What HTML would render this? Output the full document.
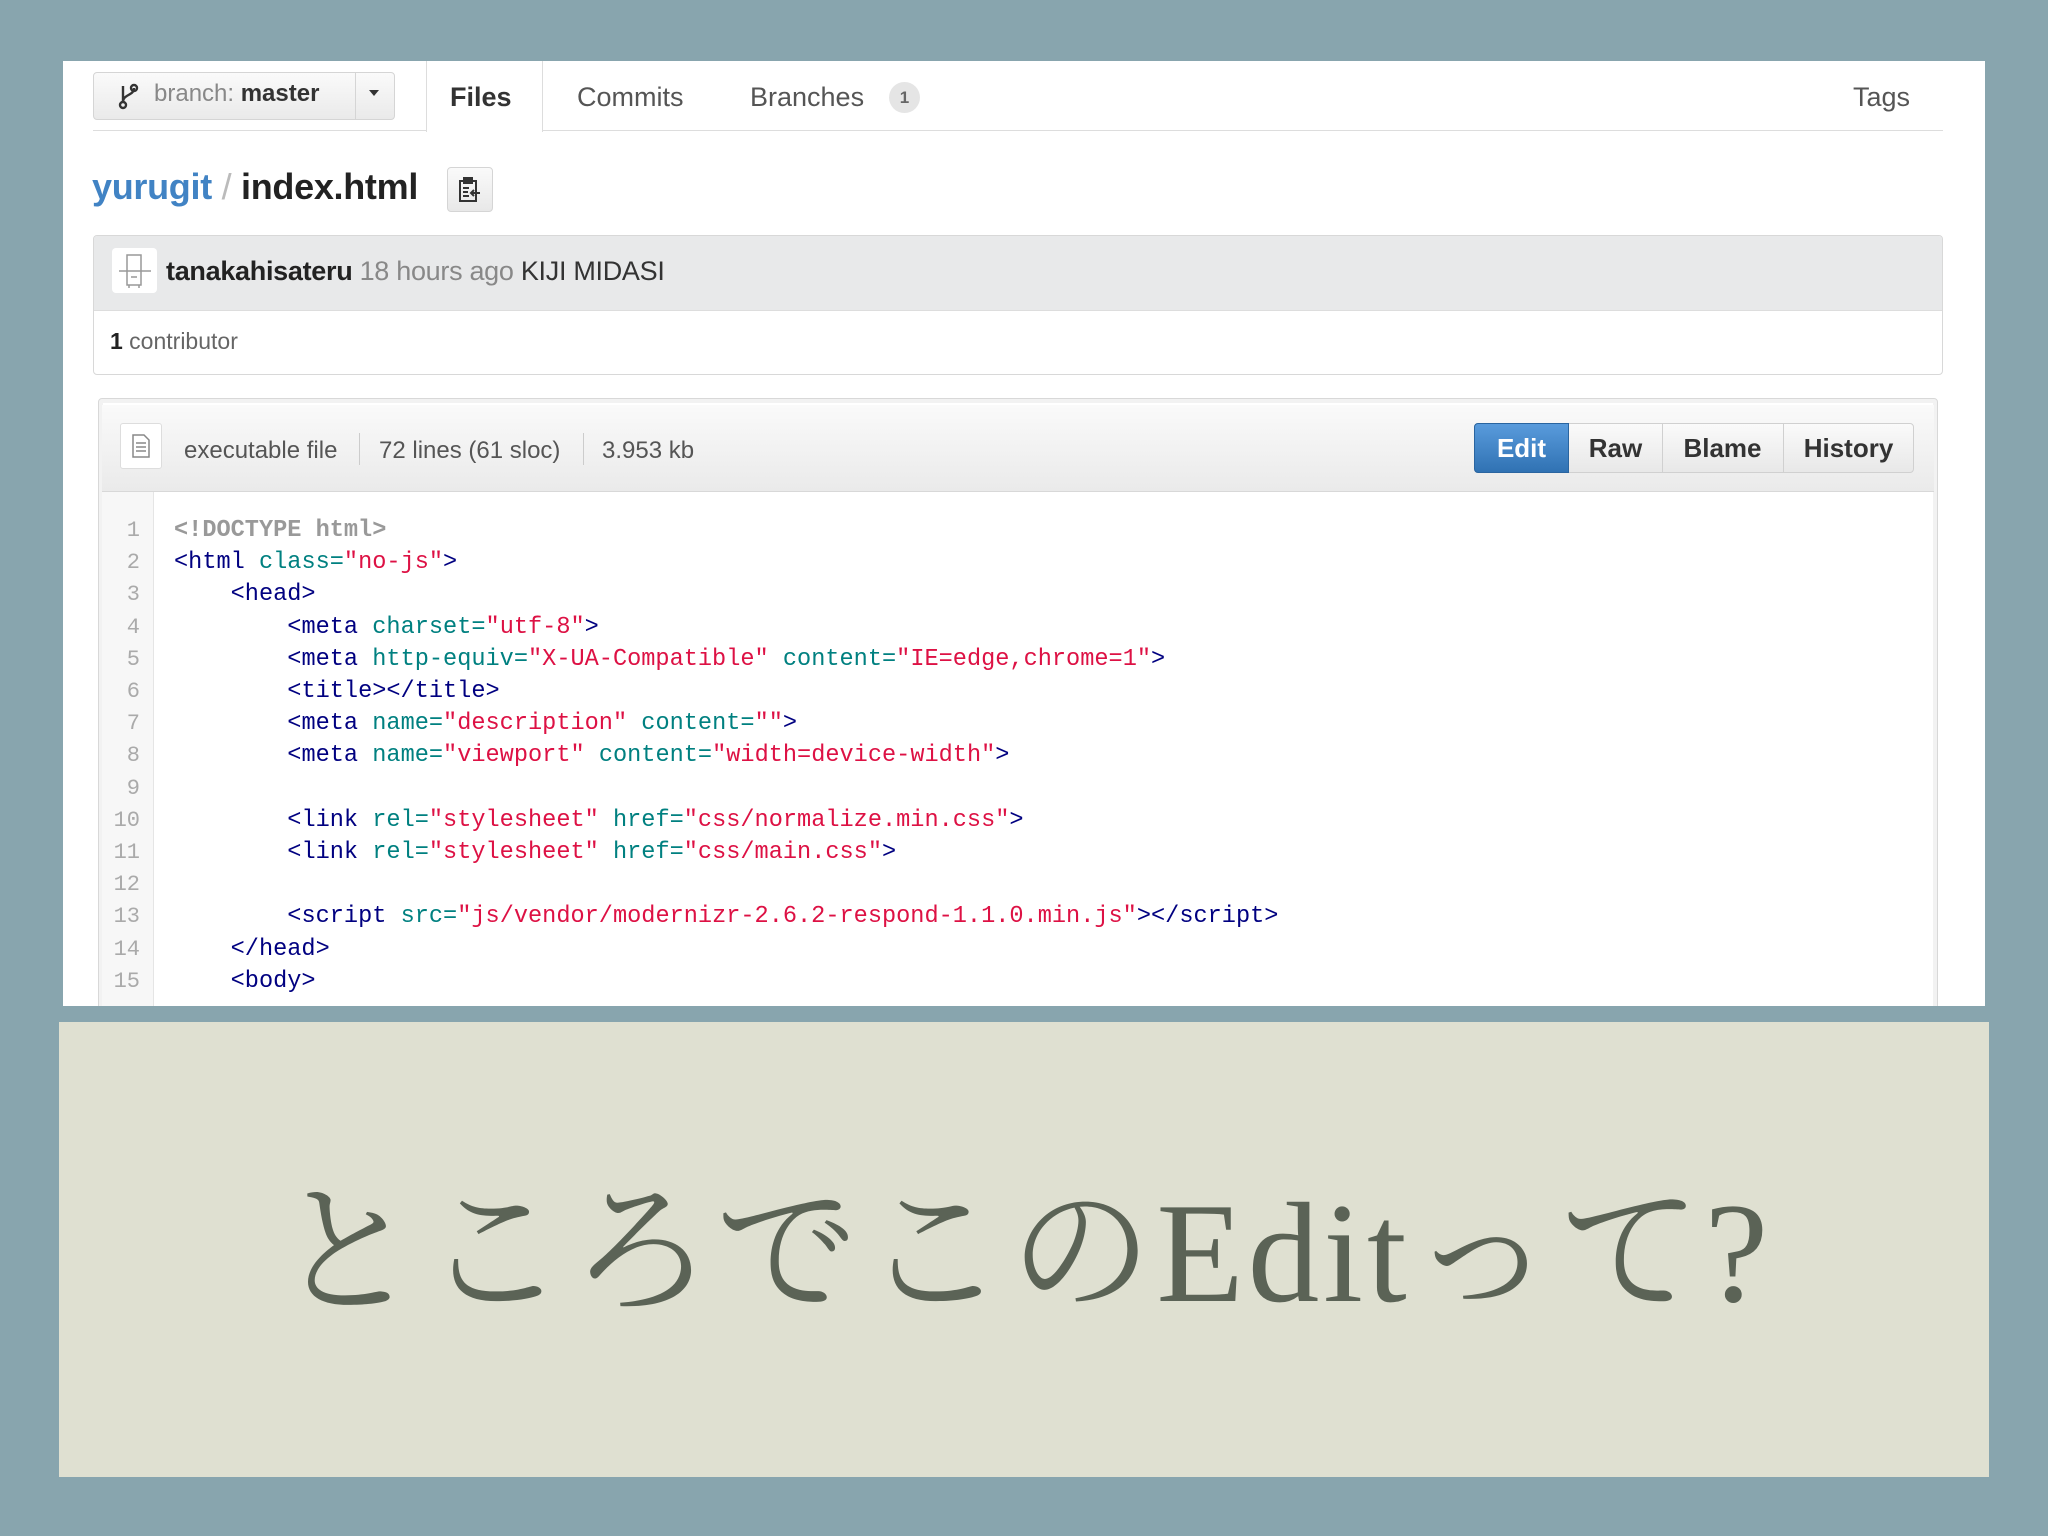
<!DOCTYPE html>
<html><head><meta charset="utf-8">
<style>
*{margin:0;padding:0;box-sizing:border-box}
body{width:2048px;height:1536px;overflow:hidden;position:relative;background:#88a5ae;font-family:"Liberation Sans",sans-serif}
.a{position:absolute;white-space:nowrap}
#panel{left:63px;top:61px;width:1922px;height:945px;background:#fff}
.code{font-family:"Liberation Mono",monospace;font-size:23.6px;line-height:32.2px}
.t{color:#000080}.n{color:#008080}.s{color:#dd1144}
.ln{color:#aaa;font-family:"Liberation Mono",monospace;font-size:22px;line-height:32.2px;text-align:right;width:40px}
</style></head><body>
<div id="panel" class="a"></div>
<!-- branch button -->
<div class="a" style="left:93px;top:72px;width:302px;height:48px;border:1px solid #d5d5d5;border-radius:4px;background:linear-gradient(#fafafa,#eaeaea)"></div>
<div class="a" style="left:355px;top:73px;width:1px;height:46px;background:#d5d5d5"></div>
<svg class="a" style="left:118px;top:82px" width="22" height="28" viewBox="0 0 22 28"><g fill="none" stroke="#333" stroke-width="2.4"><circle cx="5" cy="23" r="3"/><path d="M5 4v16M16 6c0 8-11 6-11 14"/><circle cx="16" cy="6" r="3"/></g></svg>
<div class="a" style="left:154px;top:80px;font-size:24px;color:#888">branch: <b style="color:#333">master</b></div>
<div class="a" style="left:369px;top:90px;width:0;height:0;border-left:5px solid transparent;border-right:5px solid transparent;border-top:6px solid #333"></div>
<!-- tabs -->
<div class="a" style="left:93px;top:130px;width:1850px;height:1px;background:#ddd"></div>
<div class="a" style="left:426px;top:61px;width:117px;height:71px;background:#fff;border-left:1px solid #ddd;border-right:1px solid #ddd"></div>
<div class="a" style="left:450px;top:82px;font-size:27px;font-weight:bold;color:#333">Files</div>
<div class="a" style="left:577px;top:82px;font-size:27px;color:#555">Commits</div>
<div class="a" style="left:750px;top:82px;font-size:27px;color:#555">Branches</div>
<div class="a" style="left:889px;top:82px;width:31px;height:31px;border-radius:16px;background:#e5e5e5;color:#666;font-size:17px;font-weight:bold;text-align:center;line-height:31px">1</div>
<div class="a" style="left:1853px;top:82px;font-size:27px;color:#555">Tags</div>
<!-- breadcrumb -->
<div class="a" style="left:92px;top:166px;font-size:36px;font-weight:bold;letter-spacing:-0.3px"><span style="color:#4183c4">yurugit</span><span style="color:#bbb;font-weight:normal"> / </span><span style="color:#222">index.html</span></div>
<div class="a" style="left:447px;top:167px;width:46px;height:45px;border:1px solid #d5d5d5;border-radius:4px;background:linear-gradient(#fafafa,#e8e8e8)"></div>
<svg class="a" style="left:458px;top:176px" width="24" height="28" viewBox="0 0 24 28"><g fill="none" stroke="#333" stroke-width="2"><rect x="2" y="5" width="16" height="20"/><rect x="6" y="2" width="8" height="5" fill="#333"/><path d="M5 12h6M5 16h5M5 20h6M22 17h-9M16 14l-3 3 3 3"/></g></svg>
<!-- commit box -->
<div class="a" style="left:93px;top:235px;width:1850px;height:140px;border:1px solid #d8d8d8;border-radius:4px;background:#fff;overflow:hidden"><div style="height:75px;background:#e8e9ea;border-bottom:1px solid #ddd"></div></div>
<div class="a" style="left:112px;top:248px;width:45px;height:45px;background:#fff;border-radius:4px"></div>
<svg class="a" style="left:115px;top:251px" width="40" height="40" viewBox="0 0 40 40"><g fill="none" stroke="#999" stroke-width="1.5"><path d="M12 4h14v30H12zM4 20h32M16 26h6M14 34v3M24 34v3"/></g></svg>
<div class="a" style="left:166px;top:256px;font-size:27px;color:#888;letter-spacing:-0.3px"><b style="color:#222">tanakahisateru</b> 18 hours ago <span style="color:#333">KIJI MIDASI</span></div>
<div class="a" style="left:110px;top:328px;font-size:23px;color:#666"><b style="color:#222">1</b> contributor</div>
<!-- file box -->
<div class="a" style="left:98px;top:398px;width:1840px;height:620px;border:1px solid #d8d8d8;border-radius:4px;background:#fff;overflow:hidden;box-shadow:0 0 0 4px #f2f2f2 inset"></div>
<div class="a" style="left:102px;top:405px;width:1832px;height:87px;background:linear-gradient(#fafafa,#eaeaea);border-bottom:1px solid #d8d8d8"></div>
<div class="a" style="left:120px;top:423px;width:42px;height:46px;background:#fff;border:1px solid #ddd;border-radius:3px"></div>
<svg class="a" style="left:131px;top:434px" width="20" height="24" viewBox="0 0 20 24"><g fill="none" stroke="#888" stroke-width="1.5"><path d="M2 1h11l5 5v17H2z M5 9h10M5 13h10M5 17h10"/></g></svg>
<div class="a" style="left:184px;top:437px;font-size:24px;color:#555">executable file</div>
<div class="a" style="left:359px;top:433px;width:1px;height:32px;background:#ccc"></div>
<div class="a" style="left:379px;top:437px;font-size:24px;color:#555">72 lines (61 sloc)</div>
<div class="a" style="left:583px;top:433px;width:1px;height:32px;background:#ccc"></div>
<div class="a" style="left:602px;top:437px;font-size:24px;color:#555">3.953 kb</div>
<!-- buttons -->
<div class="a" style="left:1474px;top:423px;width:440px;height:50px;border:1px solid #d0d0d0;border-radius:4px;background:linear-gradient(#fafafa,#e8e8e8)"></div>
<div class="a" style="left:1474px;top:423px;width:95px;height:50px;border-radius:4px 0 0 4px;background:linear-gradient(#599bdc,#3072b3);border:1px solid #2a65a0;color:#fff;font-weight:bold;font-size:26px;text-align:center;line-height:48px">Edit</div>
<div class="a" style="left:1662px;top:424px;width:1px;height:48px;background:#d0d0d0"></div>
<div class="a" style="left:1783px;top:424px;width:1px;height:48px;background:#d0d0d0"></div>
<div class="a" style="left:1569px;top:423px;width:93px;font-size:26px;font-weight:bold;color:#333;text-align:center;line-height:50px">Raw</div>
<div class="a" style="left:1662px;top:423px;width:121px;font-size:26px;font-weight:bold;color:#333;text-align:center;line-height:50px">Blame</div>
<div class="a" style="left:1783px;top:423px;width:131px;font-size:26px;font-weight:bold;color:#333;text-align:center;line-height:50px">History</div>
<!-- gutter -->
<div class="a" style="left:102px;top:492px;width:52px;height:514px;background:#f7f7f7;border-right:1px solid #e5e5e5"></div>
<div class="a ln" style="left:100px;top:515px">1<br>2<br>3<br>4<br>5<br>6<br>7<br>8<br>9<br>10<br>11<br>12<br>13<br>14<br>15</div>
<div class="a code" style="left:174px;top:515px;white-space:pre"><span style="color:#999;font-weight:bold">&lt;!DOCTYPE html&gt;</span>
<span class="t">&lt;html</span> <span class="n">class=</span><span class="s">"no-js"</span><span class="t">&gt;</span>
    <span class="t">&lt;head&gt;</span>
        <span class="t">&lt;meta</span> <span class="n">charset=</span><span class="s">"utf-8"</span><span class="t">&gt;</span>
        <span class="t">&lt;meta</span> <span class="n">http-equiv=</span><span class="s">"X-UA-Compatible"</span> <span class="n">content=</span><span class="s">"IE=edge,chrome=1"</span><span class="t">&gt;</span>
        <span class="t">&lt;title&gt;&lt;/title&gt;</span>
        <span class="t">&lt;meta</span> <span class="n">name=</span><span class="s">"description"</span> <span class="n">content=</span><span class="s">""</span><span class="t">&gt;</span>
        <span class="t">&lt;meta</span> <span class="n">name=</span><span class="s">"viewport"</span> <span class="n">content=</span><span class="s">"width=device-width"</span><span class="t">&gt;</span>

        <span class="t">&lt;link</span> <span class="n">rel=</span><span class="s">"stylesheet"</span> <span class="n">href=</span><span class="s">"css/normalize.min.css"</span><span class="t">&gt;</span>
        <span class="t">&lt;link</span> <span class="n">rel=</span><span class="s">"stylesheet"</span> <span class="n">href=</span><span class="s">"css/main.css"</span><span class="t">&gt;</span>

        <span class="t">&lt;script</span> <span class="n">src=</span><span class="s">"js/vendor/modernizr-2.6.2-respond-1.1.0.min.js"</span><span class="t">&gt;&lt;/script&gt;</span>
    <span class="t">&lt;/head&gt;</span>
    <span class="t">&lt;body&gt;</span></div>
<!-- cover bottom of panel -->
<div class="a" style="left:0;top:1006px;width:2048px;height:530px;background:#88a5ae"></div>
<!-- beige -->
<div class="a" style="left:59px;top:1022px;width:1930px;height:455px;background:#dfe0d1"></div>
<div class="a" style="left:59px;top:1136px;width:1930px;text-align:center;font-family:'Liberation Serif','Noto Serif CJK JP',serif;font-size:143px;color:#5b6356;letter-spacing:4px">ところでこのEditって?</div>
</body></html>
